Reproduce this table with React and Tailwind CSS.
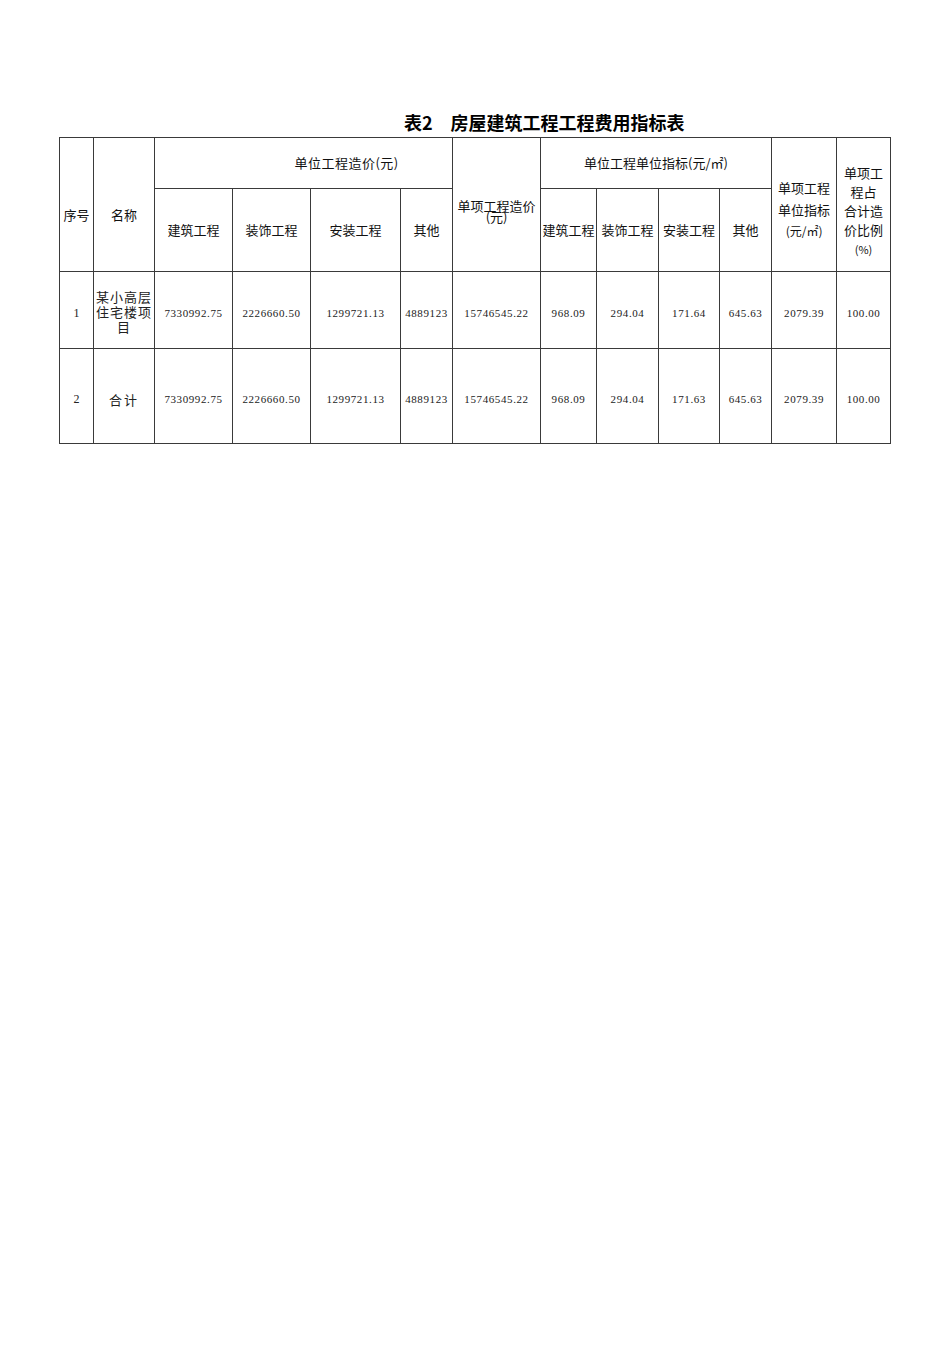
import React from "react";

const sans = { fontFamily: '"Noto Sans CJK SC", "Liberation Sans", sans-serif' };
const serif = { fontFamily: '"Liberation Serif", "Noto Sans CJK SC", serif' };

const widths = [34, 61, 78, 78, 90, 52, 88, 56, 62, 61, 52, 65, 54];

const rows = [
  {
    no: "1",
    name: (
      <span className="inline-block leading-[15px] tracking-[1px] text-[13px] pt-[5px]">
        某小高层<br />住宅楼项<br />目
      </span>
    ),
    vals: ["7330992.75", "2226660.50", "1299721.13", "4889123", "15746545.22", "968.09", "294.04", "171.64", "645.63", "2079.39", "100.00"],
    h: "h-[77px]",
  },
  {
    no: "2",
    name: <span className="inline-block pt-[8px] text-[13px] tracking-[2px]">合计</span>,
    vals: ["7330992.75", "2226660.50", "1299721.13", "4889123", "15746545.22", "968.09", "294.04", "171.63", "645.63", "2079.39", "100.00"],
    h: "h-[95px]",
  },
];

const cell = "border border-[#3a3a3a] p-0 text-center align-middle";

export default function App() {
  return (
    <div className="w-[950px] h-[1352px] bg-white pl-[59px] pt-[113px] text-[#111]">
      <div
        className="pl-[345px] h-[18px] leading-[18px] text-[18px] font-bold mb-[6px] text-black whitespace-nowrap"
        style={sans}
      >
        表2　房屋建筑工程工程费用指标表
      </div>
      <table className="table-fixed border-collapse w-[832px]" style={sans}>
        <colgroup>
          {widths.map((w, i) => (
            <col key={i} style={{ width: w }} />
          ))}
        </colgroup>
        <tbody>
          <tr className="h-[51px] text-[13px]">
            <td rowSpan={2} className={cell}>
              <div className="pt-[20px]">序号</div>
            </td>
            <td rowSpan={2} className={cell}>
              <div className="pt-[20px]">名称</div>
            </td>
            <td colSpan={4} className={cell}>
              <div className="pl-[86px] tracking-[0.5px] whitespace-nowrap">单位工程造价(元)</div>
            </td>
            <td rowSpan={2} className={cell}>
              <div className="leading-[11px] pt-[12px]">
                单项工程造价<br />(元)
              </div>
            </td>
            <td colSpan={4} className={cell}>单位工程单位指标(元/㎡)</td>
            <td rowSpan={2} className={cell}>
              <div className="leading-[21.5px] pt-[10px]">
                单项工程<br />单位指标<br />
                <span className="text-[12px]">(元/㎡)</span>
              </div>
            </td>
            <td rowSpan={2} className={cell}>
              <div className="leading-[19px] pt-[12px]">
                单项工<br />程占<br />合计造<br />价比例<br />
                <span className="text-[11px]">(%)</span>
              </div>
            </td>
          </tr>
          <tr className="h-[83px] text-[13px]">
            <td className={cell}>建筑工程</td>
            <td className={cell}>装饰工程</td>
            <td className={cell}>安装工程</td>
            <td className={cell}>其他</td>
            <td className={cell + " whitespace-nowrap"}>建筑工程</td>
            <td className={cell + " whitespace-nowrap"}>装饰工程</td>
            <td className={cell + " whitespace-nowrap"}>安装工程</td>
            <td className={cell}>其他</td>
          </tr>
          {rows.map((r, i) => (
            <tr key={i} className={r.h + " text-[#222]"}>
              <td className={cell}>
                <span className="inline-block pt-[6px] text-[12px]" style={serif}>
                  {r.no}
                </span>
              </td>
              <td className={cell}>{r.name}</td>
              {r.vals.map((v, j) => (
                <td key={j} className={cell}>
                  <span
                    className="inline-block pt-[6px] text-[11px] tracking-[0.6px] whitespace-nowrap"
                    style={serif}
                  >
                    {v}
                  </span>
                </td>
              ))}
            </tr>
          ))}
        </tbody>
      </table>
    </div>
  );
}
